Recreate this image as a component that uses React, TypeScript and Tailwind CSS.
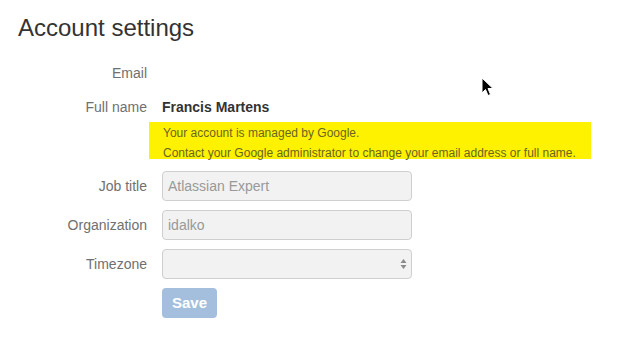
import React from "react";

const font = { fontFamily: '"Liberation Sans", Arial, sans-serif' };

function Label({ children }: { children: React.ReactNode }) {
  return (
    <div className="w-[129px] shrink-0 text-right text-[14px] text-[#707070]">{children}</div>
  );
}

export default function App() {
  return (
    <div className="relative w-[617px] h-[338px] bg-white overflow-hidden px-[18px]" style={font}>
      <h1 className="mt-[13px] h-[29px] text-[24px] leading-[29px] text-[#333333]">Account settings</h1>

      <div className="mt-[21px] flex flex-col">
        <div className="flex items-center gap-[15px] h-[20px] leading-[20px]">
          <Label>Email</Label>
        </div>
        <div className="mt-[14px] flex items-center gap-[15px] h-[20px] leading-[20px]">
          <Label>Full name</Label>
          <div className="text-[14px] font-bold text-[#333333]">Francis Martens</div>
        </div>
        <div className="mt-[5px] flex gap-[15px]">
          <div className="w-[129px] shrink-0" />
          <div className="-ml-[13px] w-[442px] h-[37px] bg-[#fff200] pl-[14px] pt-[1px] text-[12px] leading-[20px] text-[#6a6520] whitespace-nowrap">
            <div>Your account is managed by Google.</div>
            <div>Contact your Google administrator to change your email address or full name.</div>
          </div>
        </div>

        <div className="mt-[12px] flex items-center gap-[15px]">
          <Label>Job title</Label>
          <div className="w-[250px] h-[30px] rounded-[4px] border border-[#cfcfcf] bg-[#f2f2f2] pl-[5px] flex items-center text-[14px] text-[#999999]">
            Atlassian Expert
          </div>
        </div>
        <div className="mt-[9px] flex items-center gap-[15px]">
          <Label>Organization</Label>
          <div className="w-[250px] h-[30px] rounded-[4px] border border-[#cfcfcf] bg-[#f2f2f2] pl-[5px] flex items-center text-[14px] text-[#999999]">
            idalko
          </div>
        </div>
        <div className="mt-[9px] flex items-center gap-[15px]">
          <Label>Timezone</Label>
          <div className="w-[250px] h-[30px] rounded-[4px] border border-[#cfcfcf] bg-[#f2f2f2] pr-[4px] flex items-center justify-end">
            <svg width="7" height="12" viewBox="0 0 7 12">
              <path d="M3.5 1 L6.5 5 L0.5 5 Z" fill="#8a8a8a" />
              <path d="M3.5 11 L6.5 7 L0.5 7 Z" fill="#8a8a8a" />
            </svg>
          </div>
        </div>
        <div className="mt-[9px] flex items-center gap-[15px]">
          <div className="w-[129px] shrink-0" />
          <div className="w-[55px] h-[30px] rounded-[4px] bg-[#a3bfdd] flex items-center justify-center text-[15px] font-bold text-white">
            Save
          </div>
        </div>
      </div>

      <svg
        className="absolute left-[481px] top-[77px]"
        width="14"
        height="21"
        viewBox="0 0 14 21"
      >
        <path
          d="M1 1 L1 16 L4.5 12.5 L7 18.5 L9.5 17.5 L7 11.5 L12 11.5 Z"
          fill="#000"
          stroke="#fff"
          strokeWidth="1"
          strokeLinejoin="round"
        />
      </svg>
    </div>
  );
}
